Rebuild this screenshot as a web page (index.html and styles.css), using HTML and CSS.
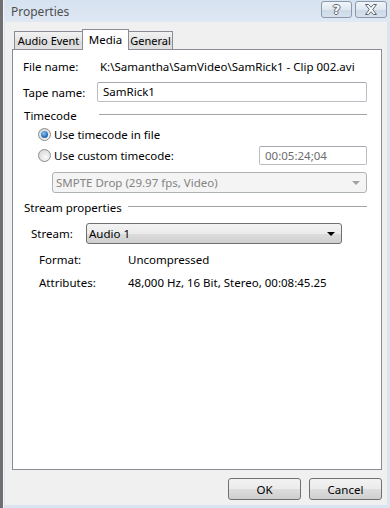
FILE: index.html
```html
<!DOCTYPE html>
<html lang="en">
<head>
    <meta charset="UTF-8">
    <meta name="viewport" content="width=device-width, initial-scale=1.0">
    <title>Properties</title>
    <link rel="stylesheet" href="styles.css">
</head>
<body>
    <div class="desk"></div>
    <div class="window">
        <div class="titlebar">
            <span class="title">Properties</span>
            <div class="caption-buttons">
                <div class="cap-btn help"><span>?</span></div>
                <div class="cap-btn close">
                    <svg width="14" height="11" viewBox="0 0 14 11">
                        <polygon points="1.5,0.5 4.5,0.5 7,3.3 9.5,0.5 12.5,0.5 8.7,5.5 12.5,10.5 9.5,10.5 7,7.7 4.5,10.5 1.5,10.5 5.3,5.5" fill="#fff" stroke="#5b6470" stroke-width="1" stroke-linejoin="round"/>
                    </svg>
                </div>
            </div>
        </div>

        <div class="client">
            <div class="tabs">
                <div class="tab audio-tab">Audio Event</div>
                <div class="tab active">Media</div>
                <div class="tab general-tab">General</div>
            </div>

            <div class="panel">
                <div class="row">
                    <span class="label file-label">File name:</span>
                    <span>K:\Samantha\SamVideo\SamRick1 - Clip 002.avi</span>
                </div>

                <div class="row tape-row">
                    <span class="label tape-label">Tape name:</span>
                    <div class="textbox">SamRick1</div>
                </div>

                <div class="group-head timecode-head">
                    <span>Timecode</span>
                    <div class="group-line"></div>
                </div>

                <div class="row radio-row">
                    <span class="radio checked"></span>
                    <span>Use timecode in file</span>
                </div>

                <div class="row radio-row custom-row">
                    <span class="radio"></span>
                    <span>Use custom timecode:</span>
                    <div class="textbox timecode-box">00:05:24;04</div>
                </div>

                <div class="select disabled smpte">
                    <span>SMPTE Drop (29.97 fps, Video)</span>
                    <span class="arrow"></span>
                </div>

                <div class="group-head stream-head">
                    <span>Stream properties</span>
                    <div class="group-line"></div>
                </div>

                <div class="row stream-row">
                    <span class="label stream-label">Stream:</span>
                    <div class="select stream-select">
                        <span>Audio 1</span>
                        <span class="arrow"></span>
                    </div>
                </div>

                <div class="row info-row">
                    <span class="label info-label">Format:</span>
                    <span>Uncompressed</span>
                </div>

                <div class="row info-row attr-row">
                    <span class="label info-label">Attributes:</span>
                    <span>48,000 Hz, 16 Bit, Stereo, 00:08:45.25</span>
                </div>
            </div>

            <div class="buttons">
                <button class="btn">OK</button>
                <button class="btn">Cancel</button>
            </div>
        </div>
    </div>
</body>
</html>
```

FILE: styles.css
```css
body {
    margin: 0;
    padding: 0;
    display: flex;
    height: 508px;
    overflow: hidden;
    background-color: #6f6f6f;
    font-family: "Noto Sans", sans-serif;
    font-size: 11.5px;
    color: #000;
}

.desk {
    width: 3px;
    background-color: #6f6f6f;
}

.window {
    flex: 1;
    display: flex;
    flex-direction: column;
    background-color: #dbe5f1;
    border-left: 1px solid #f3f6fa;
    padding: 0 3px 3px 1px;
}

/* title bar */
.titlebar {
    height: 22px;
    display: flex;
    align-items: center;
    justify-content: space-between;
    background: linear-gradient(#d6e2f0, #dfe8f3);
    margin-left: -1px;
    margin-right: -3px;
    padding-left: 7px;
}

.title {
    color: #4e4e4e;
    font-size: 12px;
}

.caption-buttons {
    display: flex;
    gap: 3px;
    margin-right: 3px;
    margin-top: -3px;
}

.cap-btn {
    width: 29px;
    height: 15px;
    border: 1px solid #8d99a8;
    border-radius: 3px;
    background: linear-gradient(#f1f5fa, #dfe7f1 50%, #ccd8e6 51%, #d8e2ee);
    display: flex;
    align-items: center;
    justify-content: center;
}

.cap-btn.close {
    width: 30px;
}

.help span {
    font-family: "DejaVu Sans", sans-serif;
    font-weight: bold;
    font-size: 13px;
    line-height: 13px;
    color: #fff;
    text-shadow: 1px 0 0 #5b6470, -1px 0 0 #5b6470, 0 1px 0 #5b6470, 0 -1px 0 #5b6470;
}

/* client area */
.client {
    flex: 1;
    background-color: #f0f0f0;
    padding: 7px 5px 0 7px;
}

.tabs {
    display: flex;
    align-items: flex-end;
    height: 20px;
    padding-left: 2px;
}

.tab {
    box-sizing: border-box;
    height: 18px;
    line-height: 17px;
    text-align: center;
    font-size: 11px;
    border: 1px solid #898c95;
    border-bottom: none;
    margin-left: -1px;
    background: linear-gradient(#f2f2f2, #e6e6e6 50%, #d9d9d9 51%, #e2e2e2);
}

.audio-tab {
    width: 69px;
    margin-left: 0;
}

.general-tab {
    width: 45px;
}

.tab.active {
    width: 47px;
    height: 21px;
    line-height: 19px;
    font-size: 11.5px;
    background: #fff;
    position: relative;
    margin-bottom: -1px;
    z-index: 1;
}

.panel {
    height: 421px;
    box-sizing: border-box;
    background-color: #fff;
    border: 1px solid #898c95;
    padding: 6px 14px 0 10px;
}

.row {
    display: flex;
    align-items: center;
    height: 20px;
}

.label {
    flex-shrink: 0;
}

.file-label {
    width: 77px;
}

.tape-row {
    margin-top: 6px;
}

.tape-label {
    width: 74px;
}

.textbox {
    flex: 1;
    height: 20px;
    box-sizing: border-box;
    border: 1px solid #b9bcc1;
    border-top-color: #a4a7ad;
    border-radius: 2px;
    padding: 0 5px;
    line-height: 18px;
}

.group-head {
    display: flex;
    align-items: center;
    height: 18px;
    margin-left: 1px;
}

.timecode-head {
    margin-top: 4px;
}

.group-line {
    flex: 1;
    height: 1px;
    margin-top: -2px;
    background-color: #a3a3a3;
}

.timecode-head .group-line {
    margin-left: 22px;
}

.stream-head {
    margin-top: 5px;
}

.stream-head .group-line {
    margin-left: 6px;
}

.radio-row {
    padding-left: 15px;
    gap: 3px;
}

.custom-row {
    margin-top: 1px;
}

.radio {
    width: 11px;
    height: 11px;
    border-radius: 50%;
    border: 1px solid #8c8c8c;
    background: radial-gradient(circle at 60% 65%, #fafafa, #dcdcdc 70%, #cfcfcf);
    display: flex;
    align-items: center;
    justify-content: center;
}

.radio.checked::after {
    content: "";
    width: 7px;
    height: 7px;
    border-radius: 50%;
    background: radial-gradient(circle at 40% 35%, #8ec7f3, #2b77bd 55%, #0f3f73);
}

.timecode-box {
    flex: none;
    width: 108px;
    height: 19px;
    margin-left: auto;
    color: #6d6d6d;
    line-height: 17px;
}

.select {
    display: flex;
    align-items: center;
    justify-content: space-between;
    box-sizing: border-box;
    height: 21px;
    border: 1px solid #707070;
    border-radius: 3px;
    padding: 0 6px 0 2px;
    background: linear-gradient(#f3f3f3, #ebebeb 50%, #dddddd 51%, #cfcfcf);
}

.select .arrow {
    width: 0;
    height: 0;
    border-left: 4px solid transparent;
    border-right: 4px solid transparent;
    border-top: 4px solid #000;
    margin-top: 1px;
}

.select.disabled {
    background: #f4f4f4;
    border-color: #adb2b5;
    color: #838383;
}

.select.disabled .arrow {
    border-top-color: #a2a2a2;
}

.smpte {
    margin: 7px 0 0 29px;
    padding-left: 3px;
}

.stream-row {
    margin-top: 7px;
    height: 21px;
}

.stream-label {
    width: 55px;
    margin-left: 8px;
}

.stream-select {
    width: 256px;
}

.info-row {
    margin-top: 5px;
}

.attr-row {
    margin-top: 3px;
}

.info-label {
    width: 89px;
    margin-left: 16px;
}

/* dialog buttons */
.buttons {
    display: flex;
    justify-content: flex-end;
    gap: 8px;
    margin-top: 8px;
}

.btn {
    width: 73px;
    height: 22px;
    padding: 0;
    border: 1px solid #707070;
    border-radius: 3px;
    background: linear-gradient(#f2f2f2, #ebebeb 50%, #dddddd 51%, #cfcfcf);
    font-family: "Noto Sans", sans-serif;
    font-size: 11.5px;
    color: #000;
}
```
